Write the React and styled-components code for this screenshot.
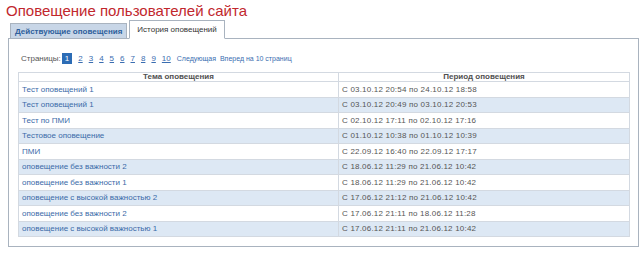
import React from 'react';
import styled, { createGlobalStyle } from 'styled-components';

const GlobalStyle = createGlobalStyle`
  body {
    margin: 0;
    background: #fff;
    font-family: "Liberation Sans", Arial, sans-serif;
  }
`;

const Page = styled.div`
  padding: 3px 5px 0 6px;
  width: 644px;
  box-sizing: border-box;
`;

const Title = styled.h1`
  margin: 0 0 1px;
  font-size: 15px;
  line-height: 16px;
  font-weight: normal;
  color: #c1272d;
`;

const Tabs = styled.div`
  display: flex;
  align-items: flex-end;
  gap: 2px;
  margin-left: 4px;
  position: relative;
  z-index: 1;
  margin-bottom: -1px;
`;

const Tab = styled.div`
  height: ${({ $active }) => ($active ? '19px' : '16px')};
  padding: 0 ${({ $active }) => ($active ? '7px' : '4px')};
  display: flex;
  align-items: center;
  box-sizing: border-box;
  font-size: 8px;
  font-weight: ${({ $active }) => ($active ? 'normal' : 'bold')};
  color: ${({ $active }) => ($active ? '#333' : '#2e5f9c')};
  background: ${({ $active }) => ($active ? '#fff' : '#c8d6e7')};
  border: 1px solid #a9b3bf;
  border-bottom-color: ${({ $active }) => ($active ? '#fff' : '#a9b3bf')};
`;

const Panel = styled.div`
  margin-left: 2px;
  border: 1px solid #a9b3bf;
  height: 209px;
  box-sizing: border-box;
  padding: 14px 9px 0 9px;
`;

const Pager = styled.div`
  display: flex;
  align-items: center;
  font-size: 8px;
  height: 10px;
  padding-left: 3px;
  color: #555;
`;

const PagerLabel = styled.span`
  margin-right: 1px;
`;

const PageLink = styled.span`
  color: ${({ $current }) => ($current ? '#fff' : '#3a6db0')};
  background: ${({ $current }) => ($current ? '#2c6cb5' : 'transparent')};
  text-decoration: ${({ $current }) => ($current ? 'none' : 'underline')};
  padding: ${({ $current }) => ($current ? '1px 3px' : '0')};
  margin-right: 6px;
`;

const PagerText = styled.span`
  color: #3a6db0;
  font-size: 7px;
  margin-right: 4px;
`;

const Table = styled.table`
  margin-top: 9px;
  width: 612px;
  border-collapse: collapse;
  font-size: 8px;
  border: 1px solid #d3d9e1;
`;

const Th = styled.th`
  height: 8px;
  padding: 0;
  font-weight: bold;
  color: #505050;
  text-align: center;
  border: 1px solid #d3d9e1;
  line-height: 8px;
`;

const Row = styled.tr`
  background: ${({ $alt }) => ($alt ? '#dde8f4' : '#fff')};
`;

const Td = styled.td`
  height: 14.5px;
  padding: 0 0 0 3px;
  border: 1px solid #d3d9e1;
  color: ${({ $link }) => ($link ? '#3a6aa8' : '#555')};
  white-space: nowrap;
  letter-spacing: ${({ $link }) => ($link ? '0' : '0.2px')};
`;

const rows = [
  ['Тест оповещений 1', 'С 03.10.12 20:54 по 24.10.12 18:58'],
  ['Тест оповещений 1', 'С 03.10.12 20:49 по 03.10.12 20:53'],
  ['Тест по ПМИ', 'С 02.10.12 17:11 по 02.10.12 17:16'],
  ['Тестовое оповещение', 'С 01.10.12 10:38 по 01.10.12 10:39'],
  ['ПМИ', 'С 22.09.12 16:40 по 22.09.12 17:17'],
  ['оповещение без важности 2', 'С 18.06.12 11:29 по 21.06.12 10:42'],
  ['оповещение без важности 1', 'С 18.06.12 11:29 по 21.06.12 10:42'],
  ['оповещение с высокой важностью 2', 'С 17.06.12 21:12 по 21.06.12 10:42'],
  ['оповещение без важности 2', 'С 17.06.12 21:11 по 18.06.12 11:28'],
  ['оповещение с высокой важностью 1', 'С 17.06.12 21:11 по 21.06.12 10:42'],
];

const pages = ['1', '2', '3', '4', '5', '6', '7', '8', '9', '10'];

const App = () => (
  <Page>
    <GlobalStyle />
    <Title>Оповещение пользователей сайта</Title>
    <Tabs>
      <Tab>Действующие оповещения</Tab>
      <Tab $active>История оповещений</Tab>
    </Tabs>
    <Panel>
      <Pager>
        <PagerLabel>Страницы:</PagerLabel>
        {pages.map(p => (
          <PageLink key={p} $current={p === '1'}>{p}</PageLink>
        ))}
        <PagerText>Следующая</PagerText>
        <PagerText>Вперед на 10 страниц</PagerText>
      </Pager>
      <Table>
        <colgroup>
          <col style={{ width: 320 }} />
          <col />
        </colgroup>
        <thead>
          <tr>
            <Th>Тема оповещения</Th>
            <Th>Период оповещения</Th>
          </tr>
        </thead>
        <tbody>
          {rows.map(([topic, period], i) => (
            <Row key={i} $alt={i % 2 === 1}>
              <Td $link>{topic}</Td>
              <Td>{period}</Td>
            </Row>
          ))}
        </tbody>
      </Table>
    </Panel>
  </Page>
);

export default App;
